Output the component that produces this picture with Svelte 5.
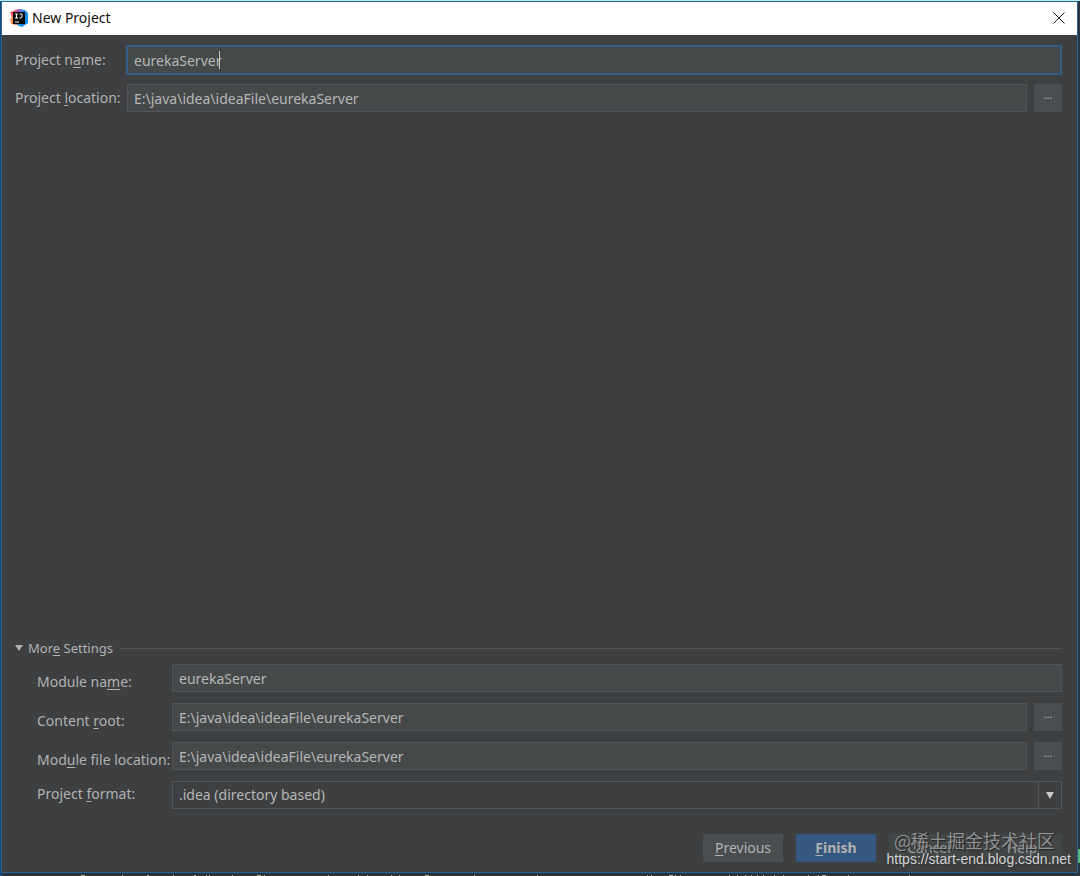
<script lang="ts">
    let projectName = $state("eurekaServer");
    let projectLocation = $state("E:\\java\\idea\\ideaFile\\eurekaServer");
    let moduleName = $state("eurekaServer");
    let contentRoot = $state("E:\\java\\idea\\ideaFile\\eurekaServer");
    let moduleFile = $state("E:\\java\\idea\\ideaFile\\eurekaServer");
    let format = $state("idea");
</script>

<div class="desktop">
    <main class="window">
        <header class="titlebar">
            <svg class="logo" viewBox="0 0 18 18" aria-hidden="true">
                <path d="M0 3 L3 2 L8 0 L10 7 L7 16 L1 14 L2 9 Z" fill="#f9576b" />
                <path d="M0 10 L5 7 L7 16 L1 15 Z" fill="#f58a4c" />
                <path d="M9 0 L15 1 L18 4 L18 14 L12 18 L7 16 Z" fill="#168be8" />
                <path d="M8 0 L12 1 L10 5 L6 4 Z" fill="#8f62c9" />
                <rect x="3" y="3" width="12" height="12" fill="#08080a" />
                <path d="M5 5 H8 M6.5 5 V9 M5 9 H8 M9.5 5 H12 V8 Q12 9 9.5 9" stroke="#fff" fill="none" />
                <path d="M5 13 H9" stroke="#fff" />
            </svg>
            <h1>New Project</h1>
            <button class="close" type="button" aria-label="Close">
                <svg viewBox="0 0 12 12" aria-hidden="true">
                    <path d="M0.5 0.5 L11.5 11.5 M11.5 0.5 L0.5 11.5" stroke="#222" fill="none" />
                </svg>
            </button>
        </header>

        <form class="content" onsubmit={(e) => e.preventDefault()}>
            <section class="project">
                <label for="project-name">Project n<u>a</u>me:</label>
                <div class="active-field">
                    <input id="project-name" class="field" bind:value={projectName} />
                    <span class="caret" aria-hidden="true"></span>
                </div>
                <label for="project-location">Project <u>l</u>ocation:</label>
                <div class="with-button">
                    <input id="project-location" class="field" bind:value={projectLocation} />
                    <button class="browse" type="button" aria-label="Browse project location">...</button>
                </div>
            </section>

            <h2 class="divider">
                <svg viewBox="0 0 8 6" aria-hidden="true"><path d="M0 0 H8 L4 6 Z" fill="#afb1b3" /></svg>
                <span>Mor<u>e</u> Settings</span>
            </h2>

            <section class="module">
                <label class="low" for="module-name">Module na<u>m</u>e:</label>
                <input id="module-name" class="field" bind:value={moduleName} />
                <label class="low" for="content-root">Content <u>r</u>oot:</label>
                <div class="with-button">
                    <input id="content-root" class="field" bind:value={contentRoot} />
                    <button class="browse" type="button" aria-label="Browse content root">...</button>
                </div>
                <label class="low" for="module-file">Mod<u>u</u>le file location:</label>
                <div class="with-button">
                    <input id="module-file" class="field" bind:value={moduleFile} />
                    <button class="browse" type="button" aria-label="Browse module file location">...</button>
                </div>
                <label for="format">Project <u>f</u>ormat:</label>
                <div class="select-wrap">
                    <select id="format" class="field" bind:value={format}>
                        <option value="idea">.idea (directory based)</option>
                    </select>
                    <span class="arrow">
                        <svg viewBox="0 0 8 7" aria-hidden="true"><path d="M0 0 H8 L4 7 Z" fill="#c8cacc" /></svg>
                    </span>
                </div>
            </section>

            <footer class="actions">
                <button type="button"><u>P</u>revious</button>
                <button type="submit" class="primary"><u>F</u>inish</button>
                <button type="button" class="faded">Cancel</button>
                <button type="button" class="faded">Help</button>
            </footer>
        </form>
    </main>

    <!-- edge of the editor behind the dialog -->
    <svg class="behind" width="1000" height="1" aria-hidden="true">
        <path
            d="M81 .5h4M122 .5h1M147 .5h2M173 .5h1M194 .5h2M206 .5h1M209 .5h1M232 .5h1M257 .5h4M264 .5h1M328 .5h1M358 .5h1M367 .5h1M391 .5h1M399 .5h1M425 .5h4M474 .5h1M537 .5h1M647 .5h1M651 .5h1M669 .5h4M675 .5h1M680 .5h1M729 .5h1M737 .5h1M745 .5h1M751 .5h1M757 .5h1M763 .5h1M774 .5h1M783 .5h1M808 .5h1M818 .5h1M822 .5h4M848 .5h1M909 .5h1"
            stroke="#b5b9bb"
        />
    </svg>
    <span class="marker"></span>

    <div class="watermark">
        <span class="community">@稀土掘金技术社区</span>
        <span class="url">https://start-end.blog.csdn.net</span>
    </div>
</div>

<style>
    :global(body) {
        background: #2d3439;
    }

    .desktop {
        position: relative;
        box-sizing: border-box;
        display: flex;
        min-height: 100vh;
        padding: 1px 2px 3px 1px;
        border-top: 0;
        background: linear-gradient(90deg, #144b78 2px, #29343c 2px);
        box-shadow: inset 0 1px #b5eef4;
        font: 14px/20px "Noto Sans", "Noto Sans CJK SC", sans-serif;
        color: #b0b2b3;
    }

    .window {
        flex: 1;
        display: flex;
        flex-direction: column;
        min-width: 0;
        border: 1px solid #2c6291;
        background: #3d3f41;
    }

    .titlebar {
        box-sizing: border-box;
        display: flex;
        align-items: center;
        height: 33px;
        padding: 0 12px 2px 8px;
        background: #fff;
        color: #111;
    }

    .logo {
        width: 18px;
        height: 18px;
        margin-right: 4px;
    }

    h1 {
        flex: 1;
        margin: 0;
        font-size: 14px;
        font-weight: 400;
    }

    button {
        padding: 0;
        border: 0;
        font: inherit;
        color: inherit;
        background: #4a4e50;
    }

    .close {
        display: flex;
        background: none;
    }

    .close svg {
        width: 12px;
        height: 12px;
    }

    u {
        text-underline-offset: 2px;
        text-decoration-skip-ink: none;
    }

    .content {
        flex: 1;
        display: flex;
        flex-direction: column;
        padding: 10px 15px 10px 13px;
    }

    .project {
        display: grid;
        grid-template-columns: 111px 1fr;
        align-items: center;
        row-gap: 9px;
        margin-bottom: auto;
    }

    .field {
        box-sizing: border-box;
        flex: 1;
        width: 100%;
        min-width: 0;
        height: 28px;
        padding: 0 6px;
        border: 1px solid #515557;
        border-radius: 0;
        outline: 0;
        background: #45494a;
        font: inherit;
        color: #b5b7b8;
    }

    .active-field {
        position: relative;
        display: flex;
    }

    .active-field .field {
        height: 30px;
        border: 2px solid #365d86;
    }

    .caret {
        position: absolute;
        top: 6px;
        left: 93px;
        width: 1px;
        height: 18px;
        background: #c5c7c8;
    }

    .with-button {
        display: flex;
        gap: 7px;
    }

    .project .with-button {
        padding-left: 1px;
    }

    .browse {
        width: 28px;
        height: 28px;
        padding-bottom: 6px;
        font-size: 11px;
        line-height: 20px;
    }

    .divider {
        display: flex;
        align-items: center;
        margin: 0 0 6px;
        font-size: 13px;
        font-weight: 400;
    }

    .divider svg {
        width: 8px;
        height: 6px;
        margin-right: 5px;
    }

    .divider::after {
        content: "";
        flex: 1;
        height: 1px;
        margin-left: 7px;
        background: #505254;
    }

    .module {
        display: grid;
        grid-template-columns: 135px 1fr;
        align-items: center;
        row-gap: 11px;
        padding-left: 22px;
    }

    .module label {
        padding-bottom: 2px;
        white-space: nowrap;
    }

    .module .low {
        padding: 7px 0 0;
    }

    .select-wrap {
        position: relative;
        display: flex;
    }

    select.field {
        appearance: none;
        background: #3d3f41;
    }

    .arrow {
        position: absolute;
        top: 1px;
        right: 1px;
        bottom: 1px;
        display: flex;
        align-items: center;
        justify-content: center;
        width: 22px;
        border-left: 1px solid #505254;
        pointer-events: none;
    }

    .arrow svg {
        width: 8px;
        height: 7px;
    }

    .actions {
        display: flex;
        justify-content: flex-end;
        gap: 13px;
        margin-top: 25px;
    }

    .actions button {
        width: 80px;
        height: 28px;
    }

    .actions .primary {
        background: #365880;
        font-weight: 700;
    }

    .actions .faded {
        background: #434748;
        color: #9a9c9d;
    }

    .behind {
        position: absolute;
        bottom: 0;
        left: 0;
        max-width: 100%;
    }

    .marker {
        position: absolute;
        right: 0;
        bottom: 13px;
        width: 2px;
        height: 14px;
        background: #59b87c;
    }

    .watermark {
        position: absolute;
        right: 9px;
        bottom: 8px;
        display: flex;
        flex-direction: column;
        align-items: flex-end;
        pointer-events: none;
    }

    .community {
        margin-right: 16px;
        font: 18px/20px "Noto Sans CJK SC", sans-serif;
        color: #8f9193;
        text-shadow: 1px 1px 1px #222;
    }

    .url {
        font: 14px/18px "Liberation Sans", sans-serif;
        color: #d2d4d5;
        text-shadow: 1px 1px 1px #333;
    }
</style>
